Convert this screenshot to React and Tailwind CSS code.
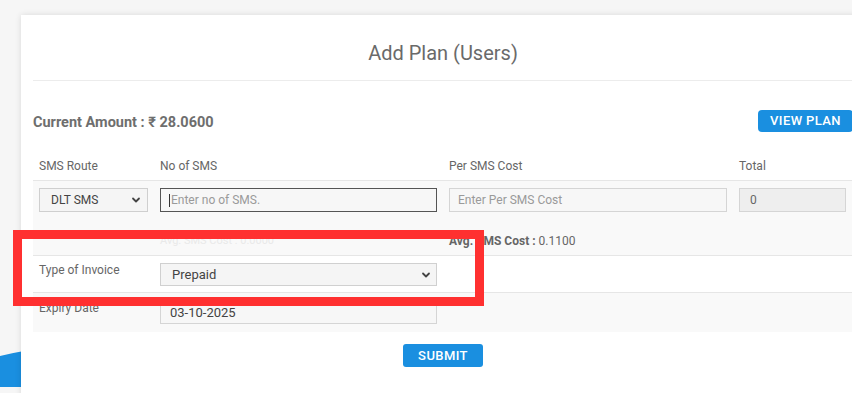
import React from "react";

const font = { fontFamily: "Roboto, 'Liberation Sans', sans-serif" };

function Chevron() {
    return (
        <svg width="10" height="10" viewBox="0 0 10 10" className="text-[#444]">
            <path d="M2 3.5 L5 6.5 L8 3.5" fill="none" stroke="currentColor" strokeWidth="1.8" strokeLinecap="round" strokeLinejoin="round" />
        </svg>
    );
}

export default function App() {
    return (
        <div className="relative w-[852px] h-[393px] overflow-hidden bg-[#f6f6f6] text-[#666]" style={font}>
            {/* blue decoration behind the card */}
            <svg className="absolute left-0 top-[350px]" width="24" height="40" viewBox="0 0 24 40">
                <path d="M0 6 Q12 3 24 1 L24 37 L0 37 Z" fill="#1a8fe0" />
            </svg>

            <div className="relative ml-[21px] mt-[15px] w-[844px] h-[400px] bg-white shadow-[0_0_6px_rgba(0,0,0,0.12)] px-[12px]">
                {/* Header */}
                <div className="h-[66px] flex items-center justify-center border-b border-[#ececec]">
                    <h1 className="text-[20px] text-[#6a6a6a] pt-[11px]">Add Plan (Users)</h1>
                </div>

                {/* Current amount + view plan */}
                <div className="mt-[29px] h-[22px] flex items-center justify-between">
                    <p className="text-[14.5px] font-bold text-[#6e6e6e] pt-[3px]">Current Amount : ₹ 28.0600</p>
                    <button className="h-[22px] px-[12px] rounded-[4px] bg-[#1a8fe0] text-white text-[13px] font-medium tracking-[0.4px]">
                        VIEW PLAN
                    </button>
                </div>

                {/* Table */}
                <div className="mt-[20px] w-[819px] text-[12px]">
                    <div className="grid grid-cols-[121px_289px_290px_119px] h-[29px] items-center border-b border-[#e6e6e6]">
                        <div className="px-[6px]">SMS Route</div>
                        <div className="px-[6px]">No of SMS</div>
                        <div className="px-[6px]">Per SMS Cost</div>
                        <div className="px-[6px]">Total</div>
                    </div>

                    <div className="grid grid-cols-[121px_289px_290px_119px] h-[75px] bg-[#f9f9f9] border-b border-[#e6e6e6]">
                        <div className="px-[6px] pt-[7px]">
                            <div className="h-[24px] border border-[#cfcfcf] bg-[#f5f5f5] flex items-center justify-between pl-[11px] pr-[6px] text-[#444]">
                                <span>DLT SMS</span>
                                <Chevron />
                            </div>
                        </div>
                        <div className="px-[6px] pt-[7px]">
                            <div className="h-[24px] border border-[#555] bg-[#f7f7f7] flex items-center pl-[8px] text-[#9a9a9a]">
                                <span className="w-px h-[13px] bg-[#333] mr-px"></span>
                                <span>Enter no of SMS.</span>
                            </div>
                            <div className="mt-[22px] text-[#e9e9e9] text-[11px] leading-[14px]">Avg. SMS Cost : 0.0000</div>
                        </div>
                        <div className="px-[6px] pt-[7px]">
                            <div className="h-[24px] border border-[#d5d5d5] bg-[#f7f7f7] flex items-center pl-[8px] text-[#9a9a9a]">
                                Enter Per SMS Cost
                            </div>
                            <div className="mt-[22px] leading-[14px] text-[#666]">
                                <span className="font-bold">Avg. SMS Cost :</span> 0.1100
                            </div>
                        </div>
                        <div className="px-[6px] pt-[7px]">
                            <div className="h-[24px] border border-[#d5d5d5] bg-[#eeeeee] flex items-center pl-[10px] text-[#666]">
                                0
                            </div>
                        </div>
                    </div>

                    <div className="grid grid-cols-[121px_289px_590px] h-[37px] bg-white border-b border-[#e6e6e6]">
                        <div className="px-[6px] pt-[7px] leading-[14px]">Type of Invoice</div>
                        <div className="px-[6px] pt-[7px]">
                            <div className="h-[23px] border border-[#d0d0d0] bg-[#f5f5f5] flex items-center justify-between pl-[11px] pr-[5px] text-[13px] text-[#444]">
                                <span>Prepaid</span>
                                <Chevron />
                            </div>
                        </div>
                        <div></div>
                    </div>

                    <div className="grid grid-cols-[121px_289px_590px] h-[39px] bg-[#f9f9f9]">
                        <div className="px-[6px] pt-[8px] leading-[14px]">Expiry Date</div>
                        <div className="px-[6px] pt-[8px]">
                            <div className="h-[23px] border border-[#d5d5d5] bg-[#f7f7f7] flex items-center pl-[9px] text-[13px] text-[#444]">
                                03-10-2025
                            </div>
                        </div>
                        <div></div>
                    </div>
                </div>

                <div className="mt-[12px] flex justify-center">
                    <button className="h-[23px] w-[80px] rounded-[3px] bg-[#1a8fe0] text-white text-[13px] font-medium tracking-[0.4px]">
                        SUBMIT
                    </button>
                </div>
            </div>

            {/* red highlight box */}
            <div className="absolute left-[13px] top-[230px] w-[471px] h-[76px] border-[9px] border-[#ff3030]"></div>
        </div>
    );
}
